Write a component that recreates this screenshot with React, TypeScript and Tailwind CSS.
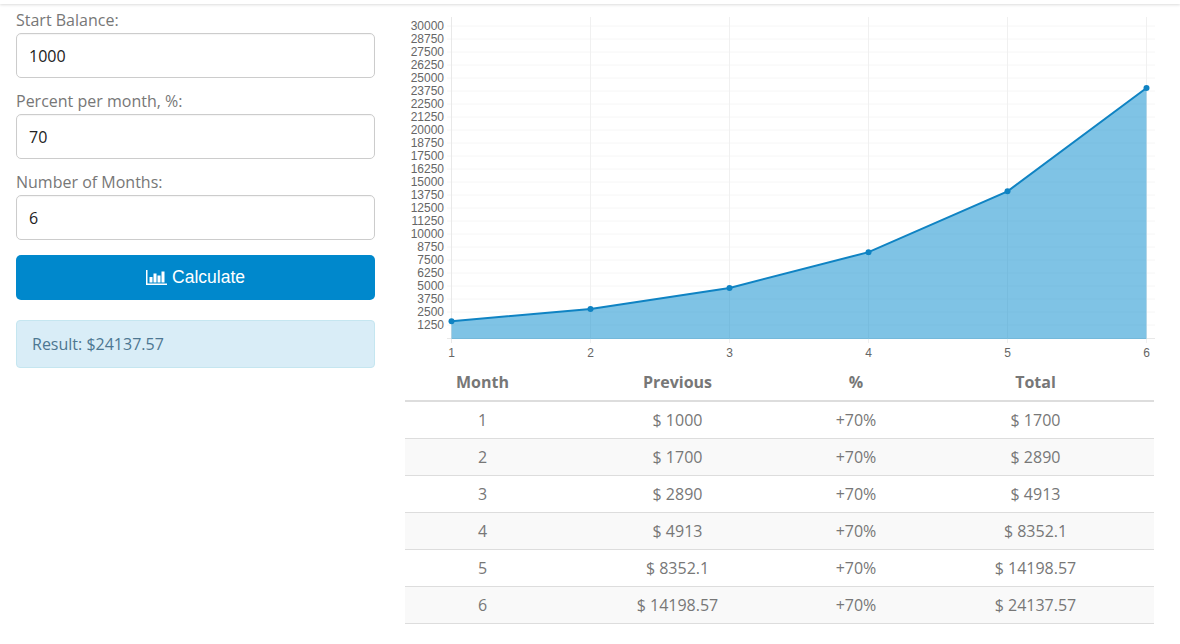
const rows = [
  ['1', '$ 1000', '+70%', '$ 1700'],
  ['2', '$ 1700', '+70%', '$ 2890'],
  ['3', '$ 2890', '+70%', '$ 4913'],
  ['4', '$ 4913', '+70%', '$ 8352.1'],
  ['5', '$ 8352.1', '+70%', '$ 14198.57'],
  ['6', '$ 14198.57', '+70%', '$ 24137.57'],
]

const balances = [1700, 2890, 4913, 8352.1, 14198.57, 24137.57]

// chart space: svg origin sits at page x=405, y=10
const xAt = (i: number) => 46.5 + i * 139
const yAt = (v: number) => 328.5 - (v * 13) / 1250
const ticks = Array.from({ length: 25 }, (_, i) => i * 1250)

function Field({ label, value }: { label: string; value: string }) {
  return (
    <div>
      <label className="block h-[23px] text-[16px] leading-[20px] text-[#777]">{label}</label>
      <input
        defaultValue={value}
        className="block h-[45px] w-full rounded-[5px] border border-[#ccc] bg-white px-3 text-[16px] text-[#222] shadow-[inset_0_1px_1px_rgba(0,0,0,0.04)] outline-none"
      />
    </div>
  )
}

function BarIcon() {
  return (
    <svg width="21" height="15" viewBox="0 0 21 15" fill="#fff" aria-hidden="true">
      <rect x="0" y="0" width="1.5" height="15" />
      <rect x="0" y="13.5" width="21" height="1.5" />
      <rect x="3.5" y="7" width="3" height="5.5" />
      <rect x="7.5" y="3.5" width="3" height="9" />
      <rect x="11.5" y="5.5" width="3" height="7" />
      <rect x="15.5" y="1.5" width="3" height="11" />
    </svg>
  )
}

function Chart() {
  const line = balances.map((v, i) => `${xAt(i)},${yAt(v)}`).join(' ')
  return (
    <svg width="750" height="352" className="block" style={{ fontFamily: '"Liberation Sans", Arial, sans-serif' }}>
      {ticks.map((t) => (
        <g key={t}>
          <line
            x1="42"
            x2="750"
            y1={t === 0 ? yAt(t) : yAt(t) - 0.5}
            y2={t === 0 ? yAt(t) : yAt(t) - 0.5}
            stroke={t === 0 ? '#e8e8e8' : '#f6f6f6'}
            strokeWidth="1"
          />
          {t > 0 && (
            <text x="39" y={yAt(t) + 3} textAnchor="end" fontSize="12" fill="#666">
              {t}
            </text>
          )}
        </g>
      ))}
      {balances.map((_, i) => (
        <g key={i}>
          <line
            x1={xAt(i)}
            x2={xAt(i)}
            y1="7"
            y2="333"
            stroke={i === 0 ? '#e8e8e8' : '#f0f0f0'}
            strokeWidth="1"
          />
          <text x={xAt(i)} y="347" textAnchor="middle" fontSize="12" fill="#666">
            {i + 1}
          </text>
        </g>
      ))}
      <g transform="translate(0 0.5)">
        <polygon
          points={`${xAt(0)},${yAt(0)} ${line} ${xAt(5)},${yAt(0)}`}
          fill="#0088cc"
          fillOpacity="0.5"
        />
        <polyline points={line} fill="none" stroke="#0f83c3" strokeWidth="2" />
        {balances.map((v, i) => (
          <circle key={i} cx={xAt(i)} cy={yAt(v)} r="3" fill="#0f83c3" />
        ))}
      </g>
    </svg>
  )
}

export default function App() {
  return (
    <div className="h-[644px] w-[1180px] overflow-hidden bg-white font-['Open_Sans',sans-serif] text-[16px]">
      {/* Top edge */}
      <div className="h-[4px] bg-white shadow-[0_1px_3px_rgba(0,0,0,0.14)]" />

      <div className="flex">
        {/* Form */}
        <div className="ml-4 mt-[6px] w-[359px]">
          <div className="flex flex-col gap-[13px]">
            <Field label="Start Balance:" value="1000" />
            <Field label="Percent per month, %:" value="70" />
            <Field label="Number of Months:" value="6" />
          </div>
          <button className="mt-[15px] flex h-[45px] w-full items-center justify-center gap-[5px] rounded-[5px] bg-[#0088cc] font-['Liberation_Sans',Arial,sans-serif] text-[17.5px] text-white">
            <BarIcon />
            Calculate
          </button>
          <div className="mt-5 flex h-[48px] items-center rounded-[4px] border border-[#c5e6f0] bg-[#d9edf7] px-[15px] text-[#4d7792]">
            Result: $24137.57
          </div>
        </div>

        {/* Chart and table */}
        <div className="ml-[30px] w-[749px]">
          <div className="mt-[6px]">
            <Chart />
          </div>
          <table className="mt-[2px] w-[749px] table-fixed border-collapse text-center text-[#777]">
            <colgroup>
              <col className="w-[155px]" />
              <col className="w-[235px]" />
              <col className="w-[122px]" />
              <col className="w-[237px]" />
            </colgroup>
            <thead>
              <tr className="h-[37px] border-b-2 border-[#ddd]">
                <th className="font-bold">Month</th>
                <th className="font-bold">Previous</th>
                <th className="font-bold">%</th>
                <th className="font-bold">Total</th>
              </tr>
            </thead>
            <tbody>
              {rows.map((row, index) => (
                <tr key={row[0]} className={`h-[37px] border-b border-[#ddd] ${index % 2 === 1 ? 'bg-[#f9f9f9]' : ''}`}>
                  {row.map((cell, c) => (
                    <td key={c}>{cell}</td>
                  ))}
                </tr>
              ))}
            </tbody>
          </table>
        </div>
      </div>
    </div>
  )
}
